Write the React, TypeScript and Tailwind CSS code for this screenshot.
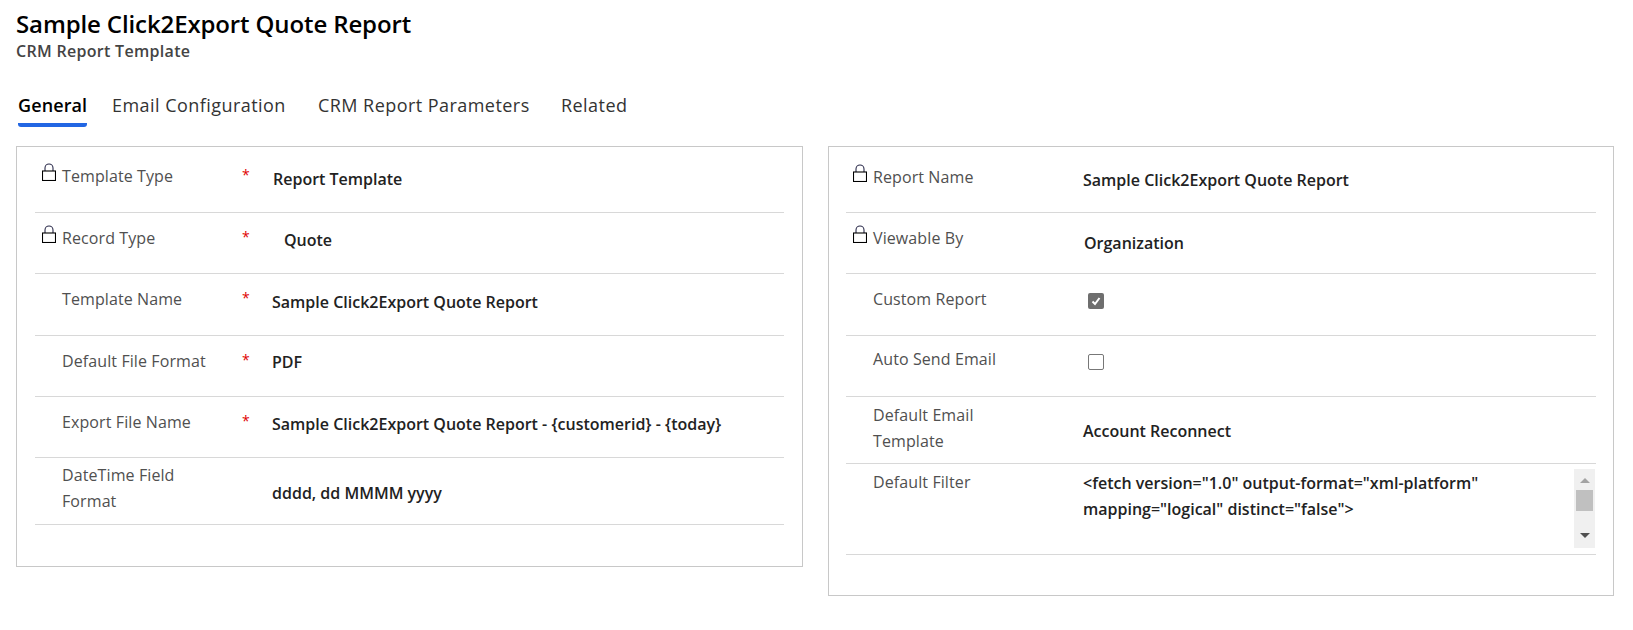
const F = "font-['Open_Sans',sans-serif]";

function Lock() {
  return (
    <svg width="14" height="18" viewBox="0 0 14 18" className="ml-[7px] block" fill="none">
      <path d="M3 8V5a4 4 0 0 1 8 0v3" stroke="#2a2a4a" strokeWidth="1.1" />
      <rect x="0.5" y="8" width="13" height="9.5" fill="#fff" stroke="#000" strokeWidth="1.1" />
    </svg>
  );
}

type RowProps = {
  label: React.ReactNode;
  lock?: boolean;
  star?: boolean;
  labelW: string;
  h: string;
  lp: string;
  children: React.ReactNode;
};

function Row({ label, lock, star, labelW, h, lp, children }: RowProps) {
  return (
    <div className={`flex border-b border-[#d8d8d8] ${h}`}>
      <div className={`w-[27px] shrink-0 ${lp}`}>{lock && <Lock />}</div>
      <div className={`${labelW} shrink-0 ${lp} text-[16px] leading-[26px] text-[#505050] tracking-[0.1px]`}>{label}</div>
      {star && <div className={`w-[31px] shrink-0 ${lp} text-[14px] leading-[24px] text-[#e00000]`}>*</div>}
      {children}
    </div>
  );
}

function Value({ className, children }: { className: string; children: React.ReactNode }) {
  return <div className={`text-[16px] leading-[26px] font-semibold text-[#222] whitespace-nowrap ${className}`}>{children}</div>;
}

function Check({ checked, className }: { checked: boolean; className: string }) {
  return checked ? (
    <div className={`w-4 h-4 rounded-[2px] bg-[#6e6e6e] flex items-center justify-center ${className}`}>
      <svg width="12" height="12" viewBox="0 0 12 12" fill="none">
        <path d="M2.5 6.5 5 9l4.5-6" stroke="#fff" strokeWidth="2" />
      </svg>
    </div>
  ) : (
    <div className={`w-4 h-4 rounded-[2px] border border-[#777] bg-white ${className}`} />
  );
}

function Scrollbar() {
  return (
    <div className="ml-auto mt-[5px] mr-[1px] w-[21px] h-[79px] bg-[#f0f0f0] flex flex-col items-center pt-[9px]">
      <div className="w-0 h-0 border-x-[5px] border-x-transparent border-b-[5px] border-b-[#a3a3a3]" />
      <div className="w-[17px] h-[21px] bg-[#c0c0c0] mt-[7px]" />
      <div className="w-0 h-0 border-x-[5px] border-x-transparent border-t-[5px] border-t-[#505050] mt-[22px]" />
    </div>
  );
}

export default function App() {
  return (
    <div className={`${F} w-[1633px] h-[630px] bg-white overflow-hidden relative`}>
      <div className="pl-[16px] pt-[9px]">
        <div className="text-[24px] leading-[30px] font-semibold text-black tracking-[-0.12px]">Sample Click2Export Quote Report</div>
        <div className="text-[16px] leading-[22px] font-semibold text-[#444] tracking-[0.3px] mt-[1px]">CRM Report Template</div>
      </div>
      <div className="flex pl-[18px] mt-[23px] h-[61px] text-[18px] leading-[24px] text-[#333] tracking-[0.45px]">
        <div className="w-[69px] h-[42px] pt-[8px] border-b-4 border-[#2266e3] font-semibold text-black rounded-b-[3px] whitespace-nowrap tracking-[0.1px]">General</div>
        <div className="ml-[25px] pt-[8px] w-[174px] whitespace-nowrap">Email Configuration</div>
        <div className="ml-[32px] pt-[8px] w-[210px] whitespace-nowrap">CRM Report Parameters</div>
        <div className="ml-[33px] pt-[8px] whitespace-nowrap">Related</div>
      </div>
      <div className="flex items-start pl-[16px]">
        <div className="w-[787px] h-[421px] border border-[#c8c8c8] pl-[18px] pr-[18px]">
          <Row lock star labelW="w-[180px]" h="h-[66px]" lp="pt-[16px]" label="Template Type"><Value className="pt-[19px]">Report Template</Value></Row>
          <Row lock star labelW="w-[180px]" h="h-[61px]" lp="pt-[12px]" label="Record Type"><Value className="pt-[14px] pl-[11px]">Quote</Value></Row>
          <Row star labelW="w-[180px]" h="h-[62px]" lp="pt-[12px]" label="Template Name"><Value className="pt-[15px] -ml-[1px]">Sample Click2Export Quote Report</Value></Row>
          <Row star labelW="w-[180px]" h="h-[61px]" lp="pt-[12px]" label="Default File Format"><Value className="pt-[13px] -ml-[1px]">PDF</Value></Row>
          <Row star labelW="w-[180px]" h="h-[61px]" lp="pt-[12px]" label="Export File Name"><Value className="pt-[14px] -ml-[1px]">Sample Click2Export Quote Report - {"{customerid}"} - {"{today}"}</Value></Row>
          <Row labelW="w-[211px]" h="h-[67px]" lp="pt-[4px]" label={<>DateTime Field<br />Format</>}><Value className="pt-[22px] -ml-[1px]">dddd, dd MMMM yyyy</Value></Row>
        </div>
        <div className="ml-[25px] w-[786px] h-[450px] border border-[#c8c8c8] pl-[17px] pr-[17px]">
          <Row lock labelW="w-[210px]" h="h-[66px]" lp="pt-[17px]" label="Report Name"><Value className="pt-[20px]">Sample Click2Export Quote Report</Value></Row>
          <Row lock labelW="w-[210px]" h="h-[61px]" lp="pt-[12px]" label="Viewable By"><Value className="pt-[17px] pl-[1px]">Organization</Value></Row>
          <Row labelW="w-[210px]" h="h-[62px]" lp="pt-[12px]" label="Custom Report"><Check checked className="mt-[19px] ml-[5px]" /></Row>
          <Row labelW="w-[210px]" h="h-[61px]" lp="pt-[10px]" label="Auto Send Email"><Check checked={false} className="mt-[18px] ml-[5px]" /></Row>
          <Row labelW="w-[210px]" h="h-[67px]" lp="pt-[5px]" label={<>Default Email<br />Template</>}><Value className="pt-[21px]">Account Reconnect</Value></Row>
          <Row labelW="w-[210px]" h="h-[91px]" lp="pt-[5px]" label="Default Filter">
            <div className="text-[16px] leading-[26px] font-semibold text-[#222] pt-[6px] w-[470px]">
              &lt;fetch version="1.0" output-format="xml-platform" mapping="logical" distinct="false"&gt;
            </div>
            <Scrollbar />
          </Row>
        </div>
      </div>
    </div>
  );
}
